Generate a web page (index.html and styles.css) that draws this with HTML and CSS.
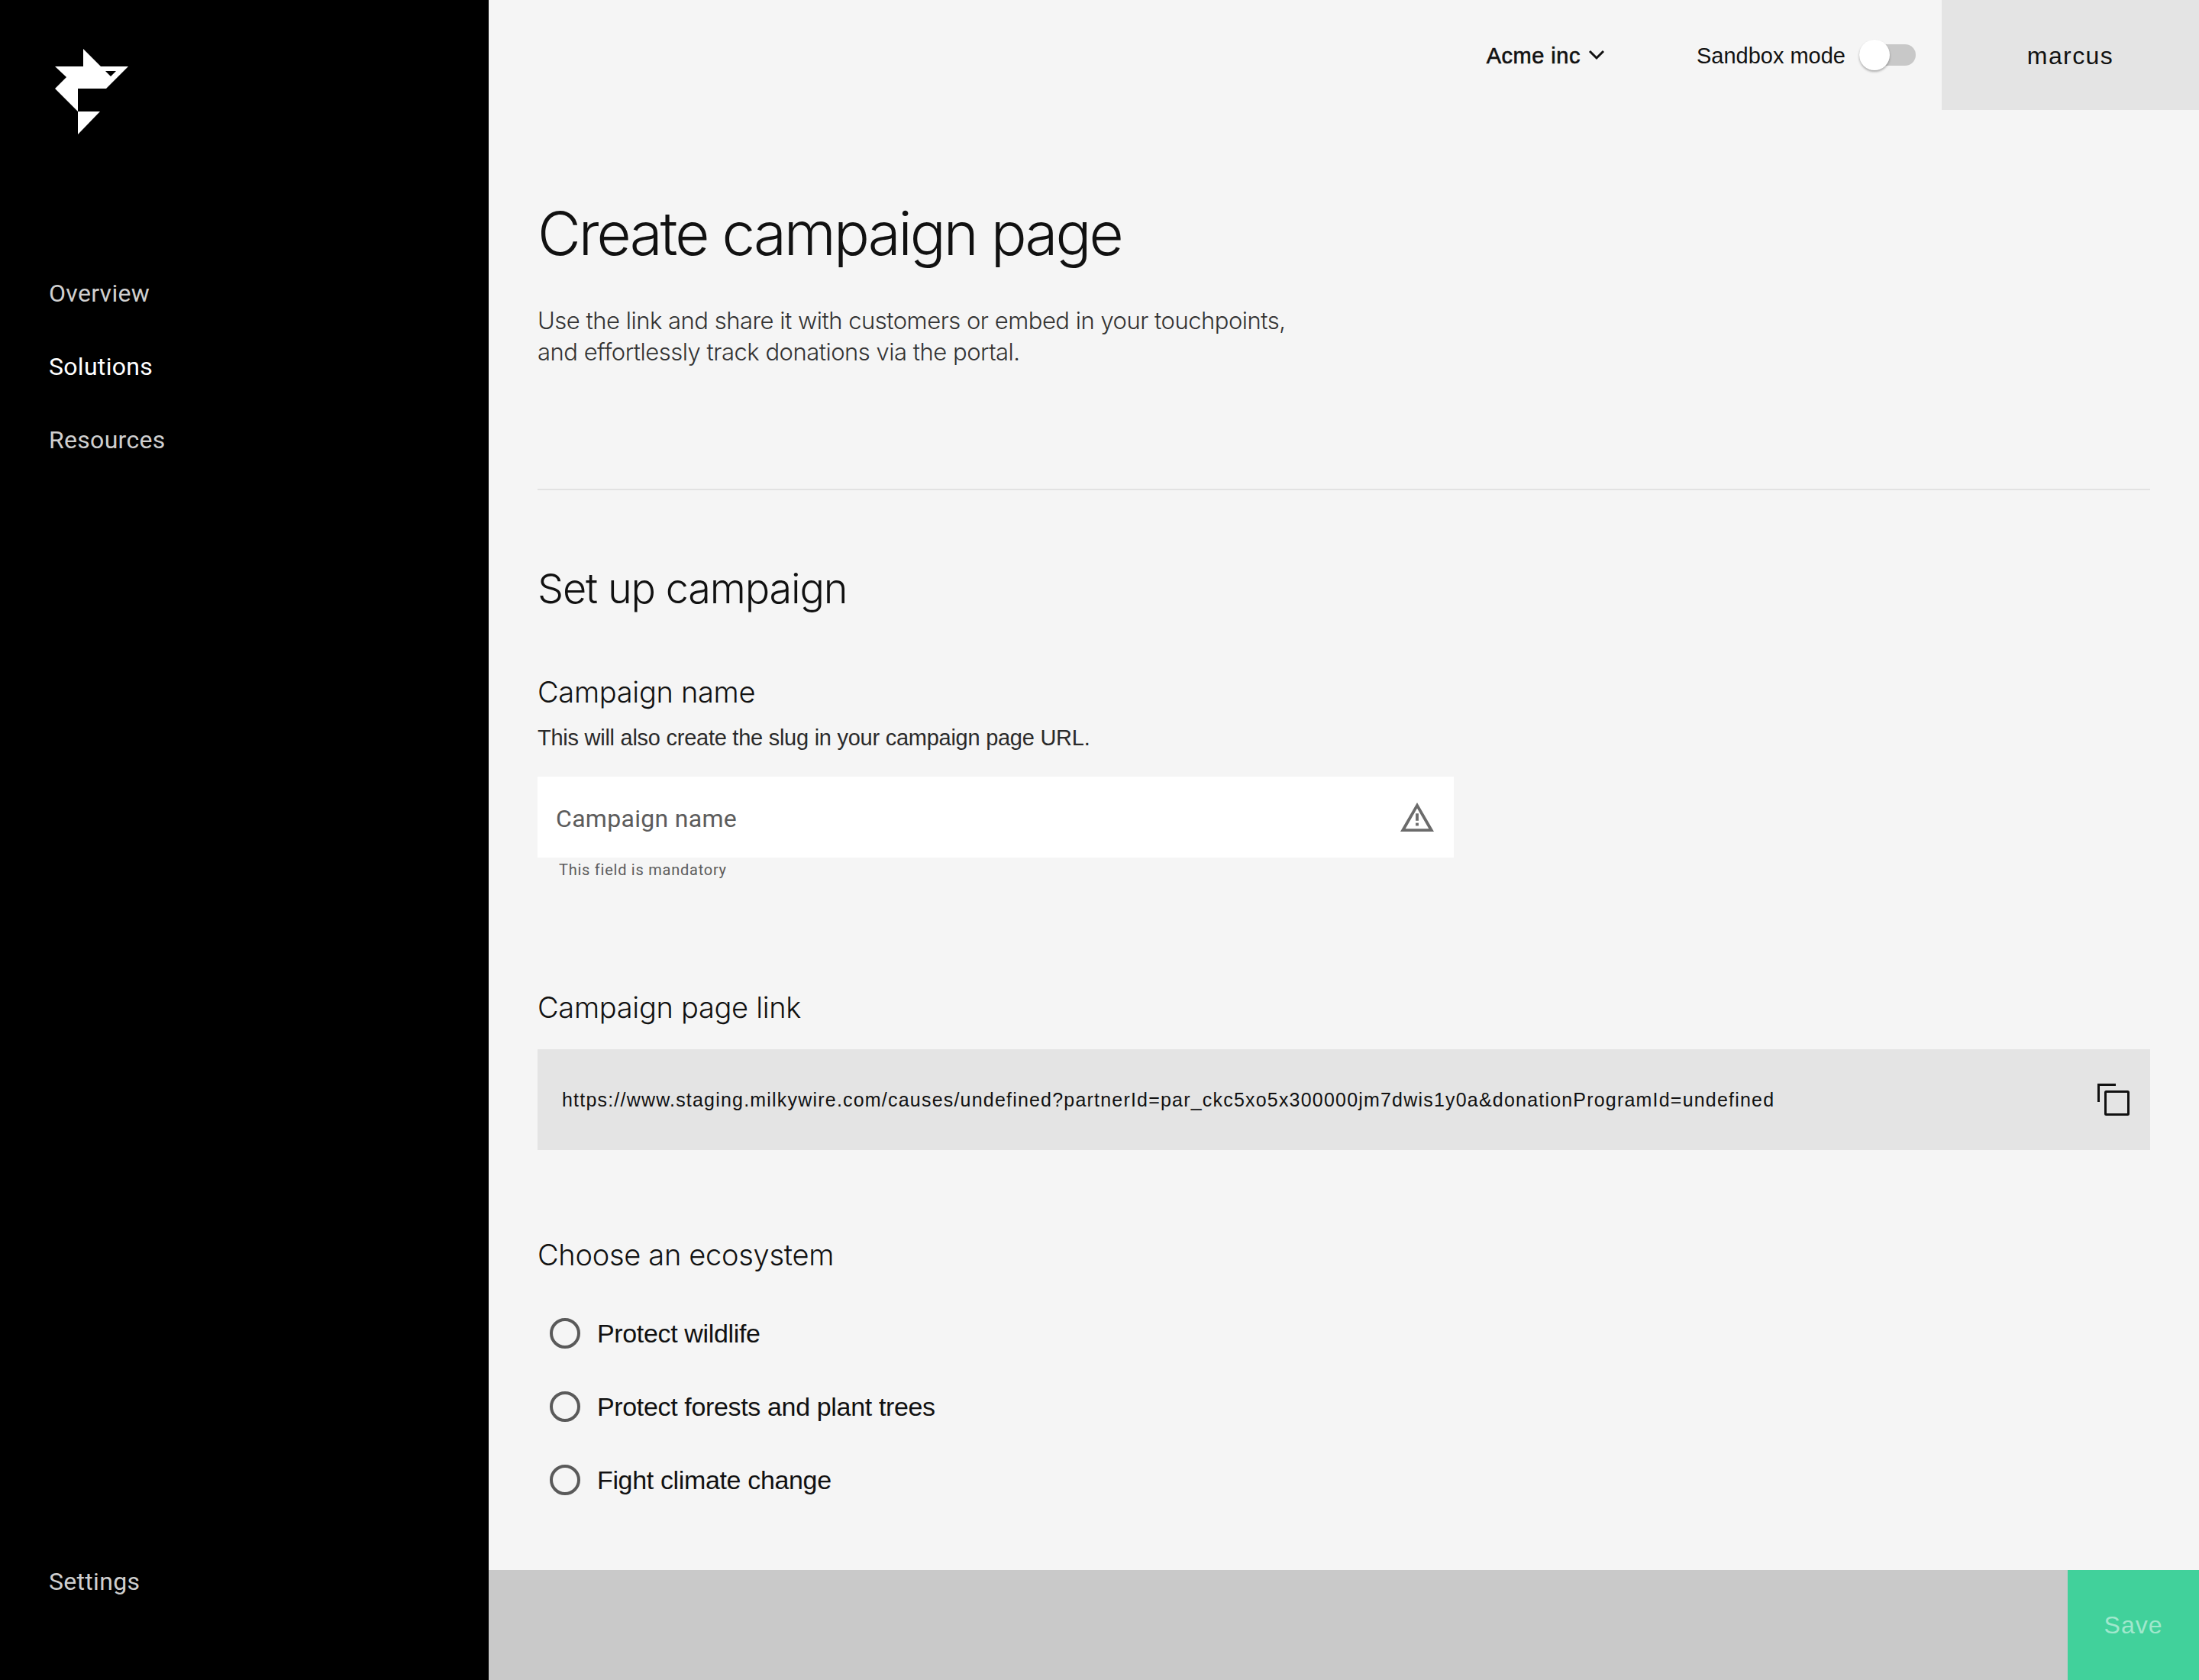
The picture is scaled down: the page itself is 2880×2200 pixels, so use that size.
FILE: index.html
```html
<!DOCTYPE html>
<html lang="en">
<head>
<meta charset="utf-8">
<title>Create campaign page</title>
<link rel="stylesheet" href="styles.css">
</head>
<body>
<div class="app">
  <aside class="sidebar">
    <svg class="logo" width="96" height="112" viewBox="72 64 96 112" aria-label="Logo">
      <path fill="#fff" fill-rule="evenodd" d="M109 64L132 87H168L139 116H102V146L72 116L87 101L72 87H109ZM138 93L145 100L152 93Z"/>
      <path fill="#fff" d="M102 146H131L102 176Z"/>
    </svg>
    <nav class="nav">
      <a class="nav-item">Overview</a>
      <a class="nav-item active">Solutions</a>
      <a class="nav-item">Resources</a>
    </nav>
    <a class="nav-item settings">Settings</a>
  </aside>
  <div class="main">
    <header class="topbar">
      <div class="org"><span>Acme inc</span>
        <svg width="22" height="14" viewBox="0 0 22 14"><path d="M2 2l9 9 9-9" fill="none" stroke="#111" stroke-width="3"/></svg>
      </div>
      <div class="sandbox"><span>Sandbox mode</span><span class="switch"><span class="thumb"></span></span></div>
      <div class="user">marcus</div>
    </header>
    <main class="content">
      <section class="intro">
        <h1>Create campaign page</h1>
        <p>Use the link and share it with customers or embed in your touchpoints,<br>and effortlessly track donations via the portal.</p>
      </section>
      <section class="form">
        <h2>Set up campaign</h2>
        <h3 class="name-label">Campaign name</h3>
        <p class="hint">This will also create the slug in your campaign page URL.</p>
        <div class="field">
          <span class="placeholder">Campaign name</span>
          <svg width="44" height="38" viewBox="0 0 46 40" preserveAspectRatio="none"><path fill="#6b6b6b" fill-rule="evenodd" d="M23 0L46 40H0ZM23 8L7 36H39Z"/><rect x="21" y="15" width="4" height="10" fill="#6b6b6b"/><rect x="21" y="28" width="4" height="4" fill="#6b6b6b"/></svg>
        </div>
        <p class="helper">This field is mandatory</p>
        <h3 class="link-label">Campaign page link</h3>
        <div class="link-box">
          <span class="url">https://www.staging.milkywire.com/causes/undefined?partnerId=par_ckc5xo5x300000jm7dwis1y0a&amp;donationProgramId=undefined</span>
          <svg width="42" height="42" viewBox="0 0 42 42" fill="none" stroke="#111" stroke-width="3"><path d="M1.5 24V1.5H24"/><rect x="10.5" y="10.5" width="30" height="30" rx="1"/></svg>
        </div>
        <h3 class="eco-label">Choose an ecosystem</h3>
        <div class="radios">
          <label class="radio"><span class="dot"></span>Protect wildlife</label>
          <label class="radio"><span class="dot"></span>Protect forests and plant trees</label>
          <label class="radio"><span class="dot"></span>Fight climate change</label>
        </div>
      </section>
    </main>
    <footer class="footer"><button class="save">Save</button></footer>
  </div>
</div>
</body>
</html>
```

FILE: styles.css
```css
* { box-sizing: border-box; }
html, body { margin: 0; padding: 0; }
body { width: 2880px; height: 2200px; background: #f5f5f5; color: #111; font-family: "Liberation Sans", Arial, sans-serif; overflow: hidden; }
h1, h2, h3, p { margin: 0; font-weight: 400; }
.app { display: flex; height: 2200px; }
.sidebar { width: 640px; flex: none; background: #000; display: flex; flex-direction: column; padding: 64px 64px 0 64px; }
.logo { margin-left: 8px; display: block; }
.nav { display: flex; flex-direction: column; gap: 56px; margin-top: 188px; }
.nav-item { font-family: Roboto, sans-serif; font-size: 32px; line-height: 40px; letter-spacing: .3px; color: #cfcfcf; display: block; }
.nav-item.active { color: #fff; }
.settings { margin-top: auto; margin-bottom: 109px; }
.main { flex: 1; min-width: 0; display: flex; flex-direction: column; }
.topbar { height: 144px; flex: none; display: flex; align-items: center; justify-content: flex-end; }
.org { display: flex; align-items: center; gap: 10px; font-size: 29px; letter-spacing: .5px; -webkit-text-stroke: .6px #111; margin-right: 120px; padding-top: 2px; }
.org svg { margin-top: -2px; }
.sandbox { display: flex; align-items: center; gap: 18px; font-size: 29px; margin-right: 34px; padding-top: 2px; }
.switch { position: relative; display: block; width: 74px; height: 28px; margin-top: -2px; background: #c8c8c8; border-radius: 14px; }
.thumb { position: absolute; left: 0; top: -6px; width: 40px; height: 40px; border-radius: 50%; background: #fff; box-shadow: 0 2px 3px rgba(0,0,0,.3); }
.user { width: 337px; height: 144px; padding-top: 2px; background: #e4e4e4; display: flex; align-items: center; justify-content: center; font-size: 32px; letter-spacing: 1.4px; }
.content { flex: 1; padding: 0 64px; min-height: 0; }
.intro { height: 498px; padding-top: 112px; border-bottom: 2px solid #e2e2e2; }
h1 { font-family: Inter, sans-serif; font-weight: 300; font-size: 78px; line-height: 100px; letter-spacing: -2.95px; }
.intro p { font-family: Inter, sans-serif; font-weight: 300; font-size: 31px; line-height: 41px; letter-spacing: -.5px; margin-top: 43px; color: #333; }
h2 { font-family: Inter, sans-serif; font-weight: 300; font-size: 54px; line-height: 70px; letter-spacing: -1.2px; margin-top: 94px; }
h3 { font-family: Inter, sans-serif; font-weight: 300; font-size: 38px; line-height: 50px; letter-spacing: -.3px; }
.name-label { margin-top: 75px; }
.hint { font-size: 29px; line-height: 36px; letter-spacing: -.26px; margin-top: 17px; color: #2a2a2a; }
.field { height: 106px; width: 1200px; margin-top: 33px; background: #fff; display: flex; align-items: center; justify-content: space-between; padding: 0 26px 0 24px; }
.placeholder { font-family: Roboto, sans-serif; font-size: 32px; letter-spacing: .3px; color: #5c5c5c; padding-top: 4px; }
.helper { font-family: Roboto, sans-serif; font-size: 20px; line-height: 24px; letter-spacing: .75px; color: #5c5c5c; margin: 4px 0 0 28px; }
.link-label { margin-top: 143px; }
.link-box { height: 132px; margin-top: 30px; background: #e4e4e4; display: flex; align-items: center; justify-content: space-between; padding: 0 27px 0 32px; }
.url { font-size: 25px; letter-spacing: 1.2px; color: #111; }
.eco-label { margin-top: 112px; }
.radios { display: flex; flex-direction: column; gap: 56px; margin-top: 58px; padding-left: 16px; }
.radio { display: flex; align-items: center; gap: 22px; height: 40px; font-size: 34px; letter-spacing: -.35px; }
.dot { width: 40px; height: 40px; border: 4px solid #5a5a5a; border-radius: 50%; flex: none; }
.footer { height: 144px; flex: none; background: #c9c9c9; display: flex; justify-content: flex-end; }
.save { width: 172px; height: 144px; border: 0; padding: 0; background: #41d19b; color: rgba(255,255,255,.5); font-family: "Liberation Sans", Arial, sans-serif; font-size: 32px; letter-spacing: 1px; }
```
